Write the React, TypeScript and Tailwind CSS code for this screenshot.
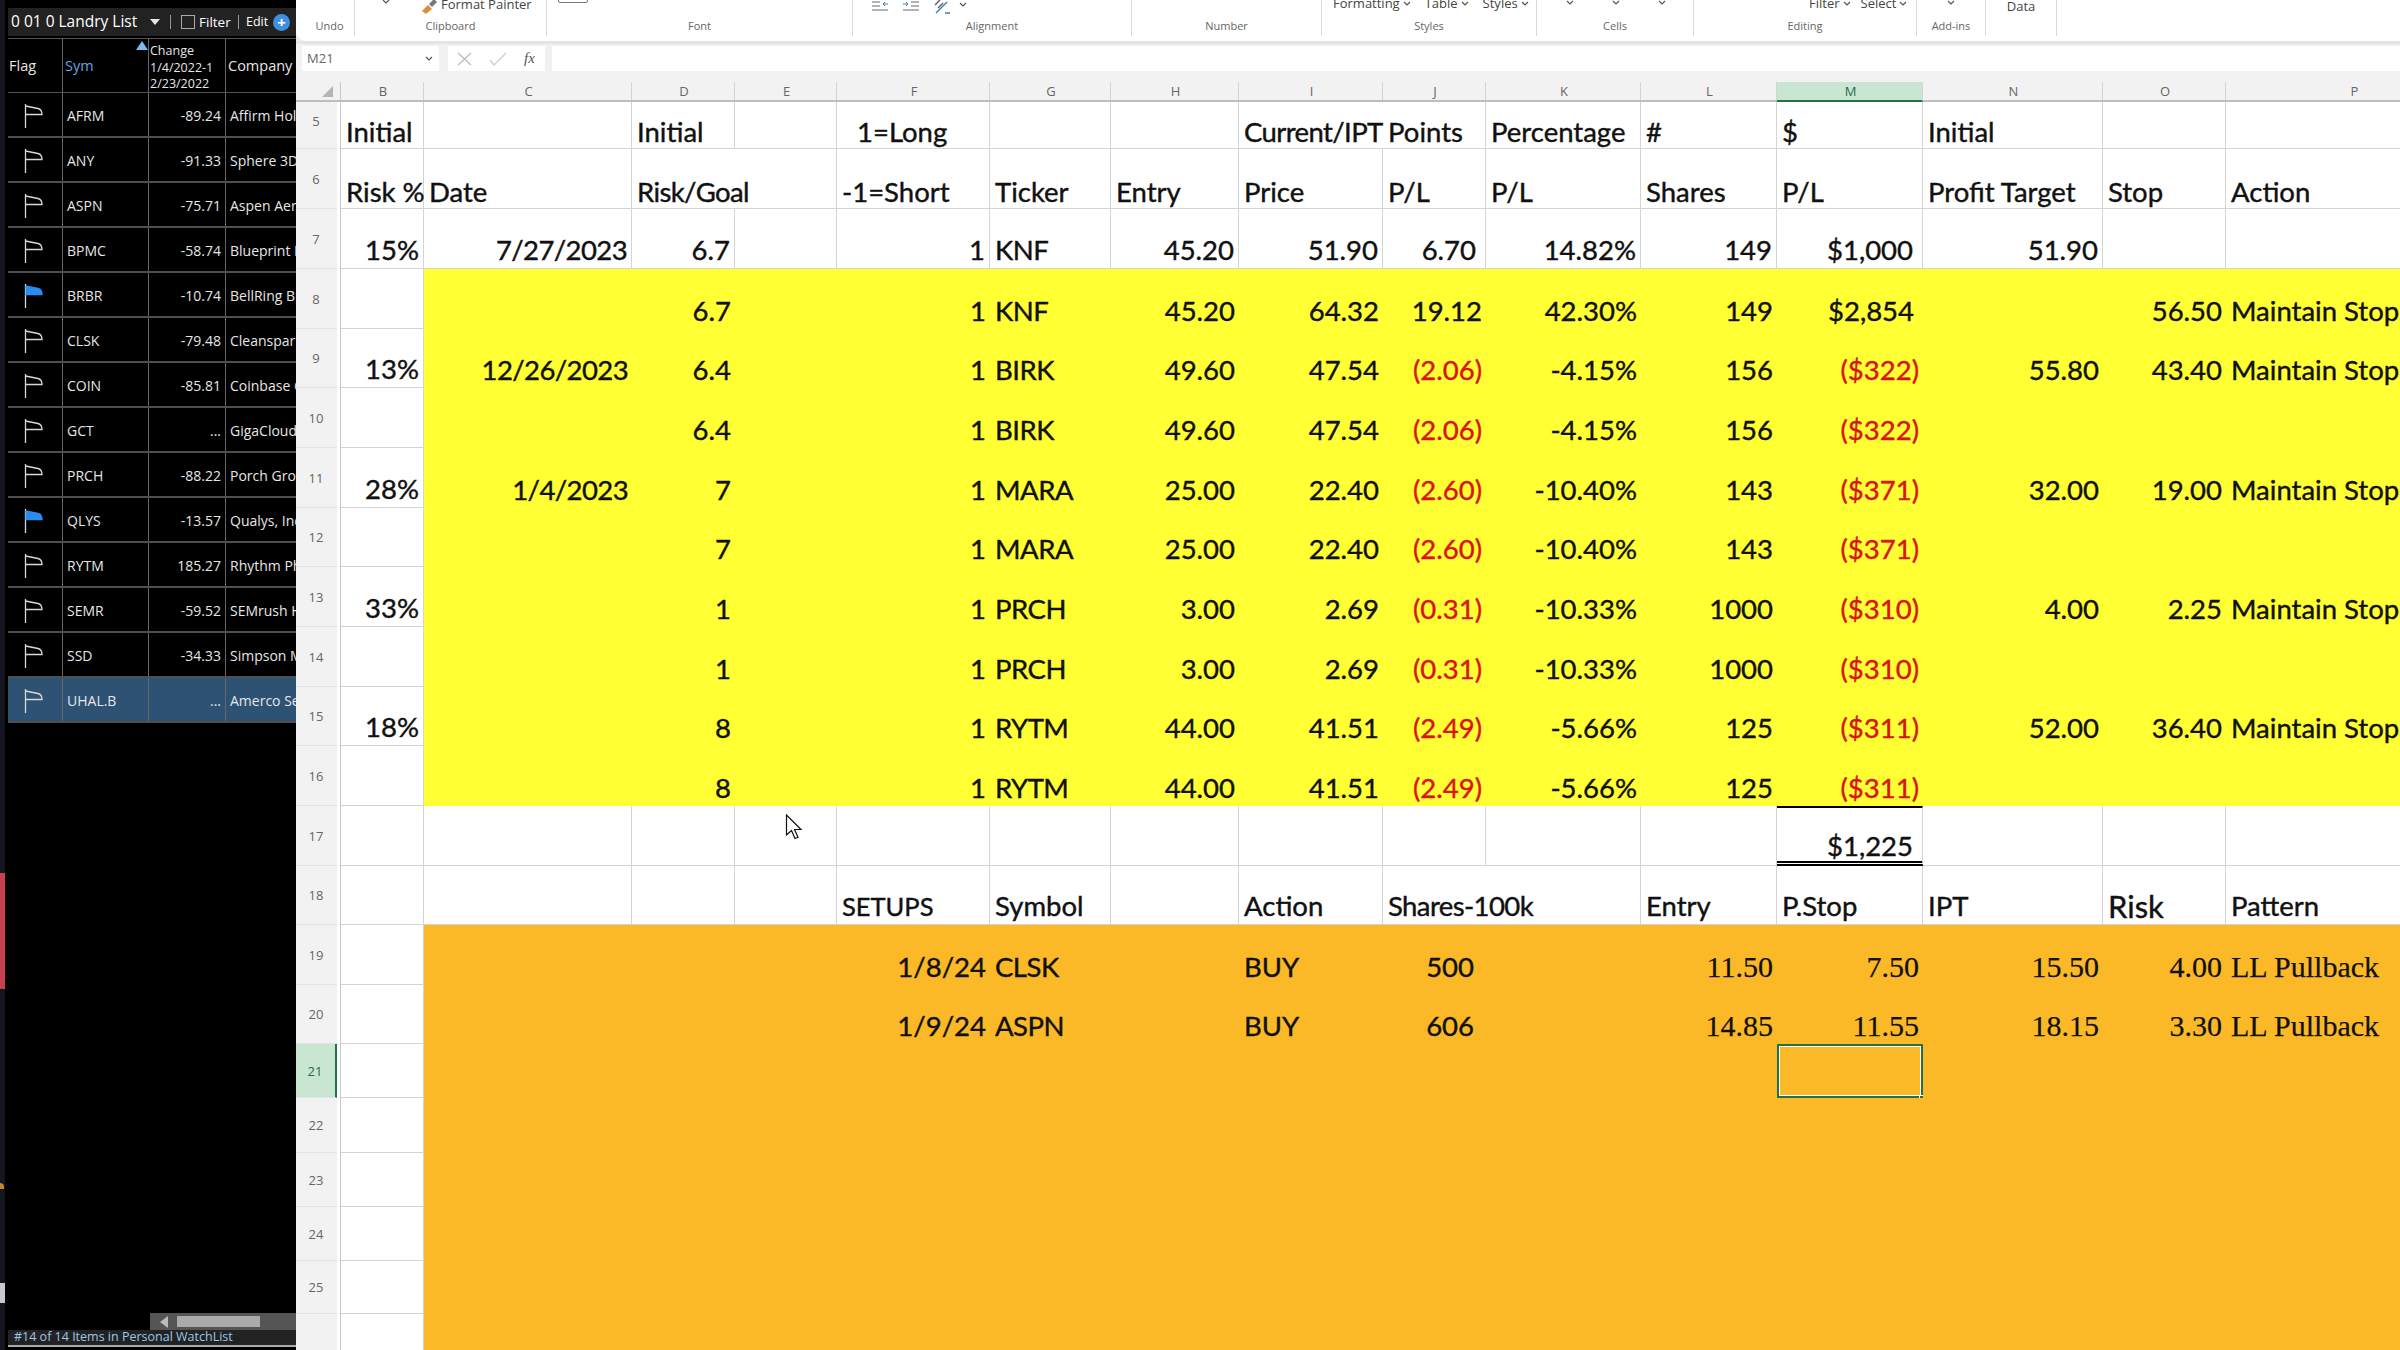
import { Fragment } from "react";

const sans = "font-['Lato','Liberation_Sans',sans-serif]";

// B..P, header gutter first
const gridCols = "grid grid-cols-[41px_4px_83px_208px_103px_102px_153px_121px_128px_144px_103px_155px_136px_146px_180px_123px_256px]";

const columns = ["B", "C", "D", "E", "F", "G", "H", "I", "J", "K", "L", "M", "N", "O", "P"];

type Cell = { v?: string; r?: boolean; red?: boolean; serif?: boolean; pl?: boolean; open?: boolean; pad?: boolean; big?: boolean; small?: boolean };
type Row = { n: number; h: string; bg?: string; cells: Record<string, Cell> };

const l = (v: string, open = false): Cell => ({ v, open });
const r = (v: string): Cell => ({ v, r: true });
const red = (v: string): Cell => ({ v, r: true, red: true });
const s = (v: string): Cell => ({ v, r: true, serif: true });
const pad = (v: string): Cell => ({ v, r: true, pad: true });

function trade(n: number, ticker: string, risk: string, entry: string, price: string, pts: string, pct: string, shares: string, pl: string, extra: Record<string, Cell> = {}): Row {
  return {
    n,
    h: "h-[59.67px]",
    bg: "yellow",
    cells: { D: r(risk), F: r("1"), G: l(ticker), H: r(entry), I: r(price), J: red(pts), K: r(pct), L: r(shares), M: red(pl), ...extra },
  };
}

const rows: Row[] = [
  { n: 5, h: "h-[47px]", cells: { B: l("Initial"), D: l("Initial"), F: { v: "1=Long", pl: true }, I: l("Current/IPT", true), J: l("Points"), K: l("Percentage"), L: l("#"), M: l("$"), N: l("Initial") } },
  { n: 6, h: "h-[60px]", cells: { B: l("Risk %"), C: l("Date"), D: l("Risk/Goal", true), F: l("-1=Short"), G: l("Ticker"), H: l("Entry"), I: l("Price"), J: l("P/L"), K: l("P/L"), L: l("Shares"), M: l("P/L"), N: l("Profit Target"), O: l("Stop"), P: l("Action") } },
  { n: 7, h: "h-[60px]", cells: { B: r("15%"), C: r("7/27/2023"), D: r("6.7"), F: r("1"), G: l("KNF"), H: r("45.20"), I: r("51.90"), J: pad("6.70"), K: r("14.82%"), L: r("149"), M: pad("$1,000"), N: r("51.90") } },
  {
    n: 8,
    h: "h-[59.67px]",
    bg: "yellow",
    cells: { D: r("6.7"), F: r("1"), G: l("KNF"), H: r("45.20"), I: r("64.32"), J: r("19.12"), K: r("42.30%"), L: r("149"), M: pad("$2,854"), O: r("56.50"), P: l("Maintain Stop") },
  },
  trade(9, "BIRK", "6.4", "49.60", "47.54", "(2.06)", "-4.15%", "156", "($322)", { B: r("13%"), C: r("12/26/2023"), N: r("55.80"), O: r("43.40"), P: l("Maintain Stop") }),
  trade(10, "BIRK", "6.4", "49.60", "47.54", "(2.06)", "-4.15%", "156", "($322)"),
  trade(11, "MARA", "7", "25.00", "22.40", "(2.60)", "-10.40%", "143", "($371)", { B: r("28%"), C: r("1/4/2023"), N: r("32.00"), O: r("19.00"), P: l("Maintain Stop") }),
  trade(12, "MARA", "7", "25.00", "22.40", "(2.60)", "-10.40%", "143", "($371)"),
  trade(13, "PRCH", "1", "3.00", "2.69", "(0.31)", "-10.33%", "1000", "($310)", { B: r("33%"), N: r("4.00"), O: r("2.25"), P: l("Maintain Stop") }),
  trade(14, "PRCH", "1", "3.00", "2.69", "(0.31)", "-10.33%", "1000", "($310)"),
  trade(15, "RYTM", "8", "44.00", "41.51", "(2.49)", "-5.66%", "125", "($311)", { B: r("18%"), N: r("52.00"), O: r("36.40"), P: l("Maintain Stop") }),
  trade(16, "RYTM", "8", "44.00", "41.51", "(2.49)", "-5.66%", "125", "($311)"),
  { n: 17, h: "h-[60px]", cells: { M: pad("$1,225") } },
  { n: 18, h: "h-[59px]", cells: { F: { v: "SETUPS", small: true }, G: l("Symbol"), I: l("Action"), J: l("Shares-100k", true), L: l("Entry"), M: l("P.Stop"), N: l("IPT"), O: { v: "Risk", big: true }, P: l("Pattern") } },
  { n: 19, h: "h-[60px]", bg: "orange", cells: { F: r("1/8/24"), G: l("CLSK"), I: l("BUY"), J: { v: "500", r: true }, L: s("11.50"), M: s("7.50"), N: s("15.50"), O: s("4.00"), P: { v: "LL Pullback", serif: true } } },
  { n: 20, h: "h-[59px]", bg: "orange", cells: { F: r("1/9/24"), G: l("ASPN"), I: l("BUY"), J: { v: "606", r: true }, L: s("14.85"), M: s("11.55"), N: s("18.15"), O: s("3.30"), P: { v: "LL Pullback", serif: true } } },
  { n: 21, h: "h-[54px]", bg: "orange", cells: {} },
  { n: 22, h: "h-[55px]", bg: "orange", cells: {} },
  { n: 23, h: "h-[54px]", bg: "orange", cells: {} },
  { n: 24, h: "h-[54px]", bg: "orange", cells: {} },
  { n: 25, h: "h-[53px]", bg: "orange", cells: {} },
  { n: 26, h: "h-[40px]", bg: "orange", cells: {} },
];

const watch = [
  ["AFRM", "-89.24", "Affirm Holdings"],
  ["ANY", "-91.33", "Sphere 3D"],
  ["ASPN", "-75.71", "Aspen Aerogels"],
  ["BPMC", "-58.74", "Blueprint Medicines"],
  ["BRBR", "-10.74", "BellRing Brands"],
  ["CLSK", "-79.48", "Cleanspark"],
  ["COIN", "-85.81", "Coinbase Global"],
  ["GCT", "...", "GigaCloud Tech"],
  ["PRCH", "-88.22", "Porch Group"],
  ["QLYS", "-13.57", "Qualys, Inc"],
  ["RYTM", "185.27", "Rhythm Pharma"],
  ["SEMR", "-59.52", "SEMrush Holdings"],
  ["SSD", "-34.33", "Simpson Mfg"],
  ["UHAL.B", "...", "Amerco Series"],
];

const FlagIcon = ({ on }: { on: boolean }) => (
  <svg width="20" height="26" viewBox="0 0 20 26" fill="none">
    <path d="M1.5 1V25" stroke="#d8d8d8" strokeWidth="1.3" />
    <path d="M1.5 3L14 5.5C17 6.2 18 8 18 11.5H1.5" stroke={on ? "#2a8cf0" : "#d8d8d8"} fill={on ? "#2a8cf0" : "none"} strokeWidth="1.3" />
  </svg>
);

const Chevron = ({ className = "" }: { className?: string }) => (
  <svg width="8" height="5" viewBox="0 0 8 5" fill="none" className={className}>
    <path d="M1 1l3 3 3-3" stroke="#555" strokeWidth="1.2" />
  </svg>
);

function WatchList() {
  return (
    <div className="relative flex h-[1350px] w-[296px] shrink-0 overflow-hidden bg-black font-['Open_Sans',sans-serif] text-[14px] text-[#e6e6e6]">
      <div className="flex w-[5px] shrink-0 flex-col bg-[#15151f]">
        <div className="h-[873px] shrink-0" />
        <div className="h-[116px] shrink-0 bg-[#c8404f]" />
        <div className="h-[194px] shrink-0" />
        <div className="h-[6px] w-[4px] shrink-0 rounded-tr-[4px] bg-[#c9822e]" />
        <div className="h-[94px] shrink-0" />
        <div className="h-[20px] shrink-0 bg-[#c8c8d0]" />
      </div>
      <div className="flex w-[291px] shrink-0 flex-col pl-[3px]">
        <div className="mt-[8px] flex h-[28px] shrink-0 items-center bg-[#222222] pl-[3px] text-white">
          <span className="w-[136px] shrink-0 whitespace-nowrap text-[15.5px]">0 01 0 Landry List</span>
          <span className="ml-[3px] h-0 w-0 border-x-[5px] border-t-[6px] border-x-transparent border-t-[#e6e6e6]" />
          <span className="ml-[10px] h-[14px] w-px bg-[#999]" />
          <span className="ml-[10px] h-[14px] w-[14px] shrink-0 border border-[#aaa]" />
          <span className="ml-[4px] w-[33px] shrink-0 text-[13.5px]">Filter</span>
          <span className="ml-[6px] h-[14px] w-px bg-[#999]" />
          <span className="ml-[7px] w-[21px] shrink-0 text-[12.5px]">Edit</span>
          <span className="ml-[6px] flex h-[17px] w-[17px] shrink-0 items-center justify-center rounded-full bg-[#3f8fe0] text-[15px] font-bold leading-none text-white">+</span>
        </div>
        <div className="relative mt-[2px] flex h-[55px] shrink-0 border-y border-[#555] text-[14.5px]">
          <div className="flex w-[55px] shrink-0 items-center border-r border-[#666] pl-[1px]">Flag</div>
          <div className="flex w-[86px] shrink-0 items-center border-r border-[#666] pl-[2px] text-[#62a6e0]">Sym</div>
          <div className="w-[77px] shrink-0 whitespace-nowrap border-r border-[#666] pl-[1px] pt-[4px] text-[12.5px] leading-[16.5px]">
            Change
            <br />
            1/4/2022-1
            <br />
            2/23/2022
          </div>
          <div className="flex items-center whitespace-nowrap pl-[2px]">Company</div>
          <span className="absolute left-[128px] top-[2px] h-0 w-0 border-x-[6px] border-b-[9px] border-x-transparent border-b-[#7fb8ea]" />
        </div>
        {watch.map(([sym, chg, co]) => (
          <div key={sym} className={`flex h-[45px] shrink-0 border-b-2 border-[#4f4f4f] ${sym === "UHAL.B" ? "bg-[#2d5274]" : ""}`}>
            <div className="flex w-[55px] shrink-0 items-center border-r border-[#666] pl-[16px] pt-[2px]">
              <FlagIcon on={sym === "BRBR" || sym === "QLYS"} />
            </div>
            <div className="flex w-[86px] shrink-0 items-center border-r border-[#666] pl-[4px] pt-[2px]">{sym}</div>
            <div className="flex w-[77px] shrink-0 items-center justify-end border-r border-[#666] pr-[4px] pt-[2px]">{chg}</div>
            <div className="flex min-w-0 flex-1 items-center overflow-hidden whitespace-nowrap pl-[4px] pt-[2px]">{co}</div>
          </div>
        ))}
        <div className="flex-1" />
        <div className="flex h-[17px] w-[146px] shrink-0 items-center self-end bg-[#555]">
          <span className="ml-[10px] h-0 w-0 border-y-[6px] border-r-[8px] border-y-transparent border-r-[#bbb]" />
          <span className="ml-[9px] h-[11px] w-[83px] bg-[#aaa]" />
        </div>
        <div className="flex h-[15px] shrink-0 items-center whitespace-nowrap bg-[#222] pl-[6px] text-[12.5px] text-[#9cc6e6]">#14 of 14 Items in Personal WatchList</div>
        <div className="h-[5px] shrink-0 border-t-2 border-[#aaa]" />
      </div>
    </div>
  );
}

const groups = [
  { label: "Undo", w: "w-[50px]" },
  { label: "Clipboard", w: "w-[192px]", body: "clip" },
  { label: "Font", w: "w-[306px]", body: "font" },
  { label: "Alignment", w: "w-[279px]", body: "align" },
  { label: "Number", w: "w-[190px]" },
  { label: "Styles", w: "w-[215px]", body: "styles" },
  { label: "Cells", w: "w-[157px]", body: "cells" },
  { label: "Editing", w: "w-[223px]", body: "edit" },
  { label: "Add-ins", w: "w-[69px]", body: "addin" },
  { label: "", w: "w-[71px]", body: "data" },
];

function GroupBody({ kind }: { kind?: string }) {
  const text = "flex items-center gap-[3px] whitespace-nowrap text-[13px] leading-none text-[#444]";
  if (kind === "clip")
    return (
      <div className="flex h-[14px] items-start pl-[27px]">
        <Chevron className="mt-[-1px]" />
        <svg width="18" height="16" viewBox="0 0 18 16" className="ml-[30px] mt-[-1px]">
          <path d="M2 12l6-6 4 4-6 5z" fill="#e08a3c" />
          <path d="M9 5l5-5 3 3-5 5z" fill="#777" />
        </svg>
        <span className={`${text} ml-[3px] mt-[-2px]`}>Format Painter</span>
      </div>
    );
  if (kind === "font")
    return (
      <div className="flex h-[14px] items-start pl-[11px]">
        <span className="mt-[-8px] h-[11px] w-[30px] rounded-[2px] border border-[#777]" />
      </div>
    );
  if (kind === "align")
    return (
      <div className="flex h-[14px] items-start gap-[13px] pl-[18px]">
        <svg width="18" height="12" viewBox="0 0 18 12" fill="none">
          <path d="M1 2h8M1 6h8M1 10h16" stroke="#667" />
          <path d="M17 4h-5M14 2l-2 2 2 2" stroke="#3f7fb5" />
        </svg>
        <svg width="18" height="12" viewBox="0 0 18 12" fill="none">
          <path d="M9 2h8M9 6h8M1 10h16" stroke="#667" />
          <path d="M1 4h5M4 2l2 2-2 2" stroke="#3f7fb5" />
        </svg>
        <svg width="18" height="14" viewBox="0 0 18 14" fill="none">
          <path d="M3 13L14 2" stroke="#3f7fb5" strokeWidth="1.5" />
          <path d="M2 5l5-5M5 8l5-5" stroke="#666" strokeWidth="1.5" />
          <path d="M12 13h5" stroke="#3f7fb5" strokeWidth="1.5" />
        </svg>
        <Chevron className="ml-[-5px] mt-[2px]" />
      </div>
    );
  if (kind === "styles")
    return (
      <div className="flex h-[14px] items-start gap-[14px] pl-[11px]">
        <span className={`${text} mt-[-3px]`}>Formatting<Chevron /></span>
        <span className={`${text} mt-[-3px]`}>Table<Chevron /></span>
        <span className={`${text} mt-[-3px]`}>Styles<Chevron /></span>
      </div>
    );
  if (kind === "cells")
    return (
      <div className="flex h-[14px] items-start gap-[38px] pl-[29px]">
        <Chevron /><Chevron /><Chevron />
      </div>
    );
  if (kind === "edit")
    return (
      <div className="flex h-[14px] items-start gap-[10px] pl-[115px]">
        <span className={`${text} mt-[-3px]`}>Filter<Chevron /></span>
        <span className={`${text} mt-[-3px]`}>Select<Chevron /></span>
      </div>
    );
  if (kind === "addin") return <div className="flex h-[14px] justify-center"><Chevron /></div>;
  if (kind === "data") return <div className={`${text} mt-[-1px] h-[14px] justify-center`}>Data</div>;
  return <div className="h-[14px]" />;
}

function Ribbon() {
  return (
    <div className="h-[41px] shrink-0 bg-[#ececec]">
      <div className="flex h-[41px] overflow-hidden rounded-bl-[10px] bg-white pl-[9px] font-['Open_Sans',sans-serif]">
        {groups.map((g) => (
          <div key={g.w + g.label} className={`${g.w} h-[36px] shrink-0 border-r border-[#d9d9d9]`}>
            <GroupBody kind={g.body} />
            <div className="mt-[5px] text-center text-[11px] leading-[14px] text-[#666]">{g.label}</div>
          </div>
        ))}
      </div>
    </div>
  );
}

function FormulaBar() {
  return (
    <div className="flex h-[34px] shrink-0 items-start border-t-[3px] border-[#e4e4e4] bg-[#f1f1f1] pl-[6px] pt-[2px]">
      <div className="flex h-[25px] w-[137px] shrink-0 items-center justify-between bg-white pl-[5px] pr-[6px] font-['Open_Sans',sans-serif] text-[13px] text-[#666]">
        M21
        <Chevron />
      </div>
      <div className="ml-[9px] flex h-[25px] w-[97px] shrink-0 items-center gap-[17px] bg-white pl-[9px]">
        <svg width="15" height="14" viewBox="0 0 15 14" stroke="#bdbdbd" strokeWidth="1.4"><path d="M1 1l13 12M14 1L1 13" /></svg>
        <svg width="18" height="14" viewBox="0 0 18 14" fill="none" stroke="#cfcfcf" strokeWidth="1.4"><path d="M1 8l4 5L17 1" /></svg>
        <span className="font-['Liberation_Serif',serif] text-[15px] italic text-[#555]">fx</span>
      </div>
      <div className="ml-[7px] h-[25px] flex-1 bg-white" />
    </div>
  );
}

function SheetHeader() {
  return (
    <div className={`${gridCols} h-[27px] shrink-0 border-b-2 border-[#bdbdbd] bg-[#f2f2f2] pt-[7px] font-['Open_Sans',sans-serif] text-[13px] leading-[16px] text-[#666]`}>
      <div className="relative">
        <span className="absolute bottom-[3px] right-[4px] h-0 w-0 border-b-[11px] border-l-[11px] border-b-[#b5b5b5] border-l-transparent" />
      </div>
      <div className="border-r border-[#c8c8c8]" />
      {columns.map((c) => (
        <div key={c} className={`flex items-center justify-center border-r border-[#d4d4d4] pl-[2px] ${c === "M" ? "mb-[-2px] border-b-2 border-b-[#217346] bg-[#c9e6d3] text-[#2a6b45]" : ""}`}>
          {c}
        </div>
      ))}
    </div>
  );
}

function SheetRow({ row }: { row: Row }) {
  const fill = row.bg === "yellow" ? "bg-[#ffff33]" : row.bg === "orange" ? "bg-[#fcb927]" : "bg-white";
  const active = row.n === 21;
  return (
    <div className={`${gridCols} ${row.h} shrink-0`}>
      <div className={`flex items-center justify-center border-b border-[#e2e2e2] pr-[1px] pt-[2px] font-['Open_Sans',sans-serif] text-[13px] ${active ? "border-r-2 border-r-[#217346] bg-[#c9e6d3] text-[#2a6b45]" : "bg-[#f2f2f2] text-[#666]"} ${row.n === 5 ? "pb-[8px]" : ""}`}>
        {row.n < 26 ? row.n : ""}
      </div>
      <div className="border-r border-[#c8c8c8] bg-white" />
      {columns.map((c) => {
        const cell = row.cells[c] ?? {};
        const filled = row.bg && c !== "B";
        const isTotal = row.n === 17 && c === "M";
        const font = cell.serif
          ? "font-['Liberation_Serif',serif] text-[30px] [-webkit-text-stroke-width:0.25px]"
          : `${sans} [-webkit-text-stroke-width:0.4px] ${cell.big ? "text-[31px]" : cell.small ? "text-[25.5px]" : "text-[27.5px]"}`;
        const align = cell.r
          ? cell.pad
            ? "justify-end pr-[9px]"
            : row.n >= 19 && c === "J"
              ? "justify-end pr-[12px]"
              : "justify-end pr-[4px]"
          : cell.pl
            ? "pl-[20px]"
            : "pl-[5px]";
        const spacing = cell.open || (c === "C" && cell.r) ? "tracking-[-0.6px]" : c === "G" && row.n !== 6 && row.n !== 18 ? "tracking-[-0.5px]" : "";
        return (
          <div
            key={c}
            className={`relative flex items-end whitespace-nowrap ${cell.open ? "z-10" : ""} ${filled ? fill : `border-b border-[#d4d4d4] bg-white ${cell.open ? "bg-transparent" : "border-r border-r-[#d4d4d4]"}`} ${align} ${font} ${cell.red ? "text-[#d81414]" : "text-[#111]"} ${isTotal ? "border-t-2 border-b-[5px] border-double border-t-black border-b-black" : ""}`}
          >
            <span className={`leading-[36px] ${isTotal ? "translate-y-[3px]" : row.n <= 6 ? "translate-y-[2px]" : ""} ${spacing}`}>{cell.v}</span>
            {active && c === "M" && (
              <Fragment>
                <span className="absolute inset-0 border-2 border-[#217346] outline outline-1 -outline-offset-3 outline-white" />
                <span className="absolute bottom-[-4px] right-[-3px] h-[7px] w-[7px] border border-white bg-[#217346]" />
              </Fragment>
            )}
          </div>
        );
      })}
    </div>
  );
}

export default function App() {
  return (
    <div className="relative flex h-[1350px] w-[2400px] overflow-hidden bg-white">
      <WatchList />
      <div className="flex min-w-0 flex-1 flex-col overflow-hidden">
        <Ribbon />
        <FormulaBar />
        <SheetHeader />
        {rows.map((row) => (
          <SheetRow key={row.n} row={row} />
        ))}
      </div>
      <svg width="18" height="26" viewBox="0 0 18 26" className="absolute left-[785px] top-[814px]">
        <path d="M1.5 1v20l5-4.5 3.5 8 3-1.3-3.5-7.7h6.5z" fill="#fff" stroke="#111" strokeWidth="1.2" />
      </svg>
    </div>
  );
}
